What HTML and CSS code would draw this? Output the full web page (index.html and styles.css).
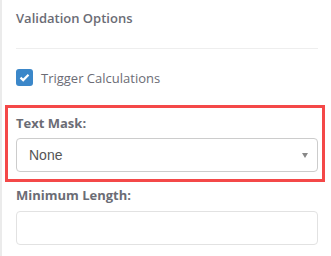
FILE: index.html
```html
<!DOCTYPE html>
<html lang="en">
    <head>
        <meta charset="UTF-8" />
        <link rel="stylesheet" href="styles.css">
        <title>Validation Options</title>
    </head>
    <body>
        <div class="panel">
            <h4 class="panel-title">Validation Options</h4>
            <hr class="panel-divider" />

            <label class="check-row">
                <span class="check-box">
                    <svg width="11" height="9" viewBox="0 0 11 9">
                        <path d="M1.5 4.6 L4.2 7.1 L9.5 1.8" fill="none" stroke="#fff" stroke-width="2.2" />
                    </svg>
                </span>
                <span class="check-text">Trigger Calculations</span>
            </label>

            <!-- 高亮的表单项 -->
            <div class="form-group highlighted">
                <div class="form-label">Text Mask:</div>
                <div class="form-select">
                    <span>None</span>
                    <span class="select-caret"></span>
                </div>
            </div>

            <div class="form-group">
                <div class="form-label">Minimum Length:</div>
                <div class="form-input"></div>
            </div>
        </div>
    </body>
</html>
```

FILE: styles.css
```css
body,
html {
    margin: 0;
    padding: 0;
    height: 100%;
    width: 100%;
    overflow: hidden;
    background: #fff;
    font-family: "Open Sans", "Liberation Sans", sans-serif;
}

.panel {
    height: 100%;
    box-sizing: border-box;
    border-left: 2px solid #ebebeb;
    padding: 0 13px 0 14px;
}

.panel-title {
    margin: 0;
    padding-top: 9px;
    font-size: 13px;
    line-height: 18px;
    font-weight: 600;
    color: #6b6c75;
}

.panel-divider {
    margin: 21px 0 0;
    border: 0;
    border-top: 1px solid #eeeeee;
}

.check-row {
    display: flex;
    align-items: center;
    gap: 8px;
    margin-top: 20px;
    height: 17px;
}

.check-box {
    width: 17px;
    height: 17px;
    border-radius: 3px;
    background: #3b87c9;
    display: flex;
    align-items: center;
    justify-content: center;
}

.check-text {
    font-size: 13px;
    color: #6b6c75;
}

.form-group {
    margin-top: 4px;
}

/* 红框：内容仍与其它表单项对齐 */
.form-group.highlighted {
    margin: 19px -7px 0 -11px;
    padding: 6px 4px 7px 8px;
    border: 3px solid #f44848;
}

.form-label {
    font-size: 13px;
    line-height: 18px;
    font-weight: 700;
    color: #6b6c75;
}

.form-select {
    margin-top: 6px;
    height: 34px;
    box-sizing: border-box;
    border: 1px solid #cccccc;
    border-radius: 4px;
    padding: 0 9px 0 12px;
    display: flex;
    align-items: center;
    justify-content: space-between;
    font-family: "Liberation Sans", Arial, sans-serif;
    font-size: 14px;
    color: #555;
}

.select-caret {
    width: 0;
    height: 0;
    border-left: 3px solid transparent;
    border-right: 3px solid transparent;
    border-top: 5px solid #888;
}

.form-input {
    margin-top: 7px;
    height: 34px;
    box-sizing: border-box;
    border: 1px solid #e2e2e2;
    border-radius: 4px;
}
```
